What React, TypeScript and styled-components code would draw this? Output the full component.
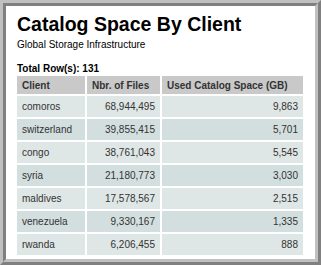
import styled, { createGlobalStyle } from 'styled-components';

const GlobalStyle = createGlobalStyle`
  html, body {
    margin: 0;
    padding: 0;
    background: #ffffff;
  }
`;

// two nested bevels make the ridge: light/dark outside, dark/light inside
const Frame = styled.div`
  width: 321px;
  height: 265px;
  box-sizing: border-box;
  border-style: solid;
  border-width: 3px;
  border-color: #c0c0c0 #808080 #808080 #c0c0c0;
`;

const Panel = styled.div`
  height: 100%;
  box-sizing: border-box;
  border-style: solid;
  border-width: 3px;
  border-color: #808080 #c0c0c0 #c0c0c0 #808080;
  background: #ffffff;
  padding: 7px 12px 0 11px;
  font-family: 'Liberation Sans', Arial, sans-serif;
  color: #000;
  overflow: hidden;
`;

const Title = styled.h1`
  margin: 0;
  font-size: 19.5px;
  font-weight: bold;
  line-height: 22px;
`;

const Subtitle = styled.div`
  font-size: 10px;
  margin-top: 3px;
  line-height: 14px;
`;

const Total = styled.div`
  font-size: 10px;
  font-weight: bold;
  margin-top: 11px;
  line-height: 12px;
`;

const Table = styled.table`
  width: 286px;
  border-collapse: separate;
  border-spacing: 0;
  font-size: 10px;
  margin-top: 1px;
`;

const Th = styled.th<{ $last?: boolean }>`
  background: #c9c9c9;
  color: #333333;
  text-align: left;
  font-weight: bold;
  height: 18px;
  padding: 0 5px;
  border-bottom: 2px solid #fff;
  border-right: ${p => (p.$last ? '0' : '2px solid #fff')};
  white-space: nowrap;
`;

const Td = styled.td<{ $alt?: boolean; $num?: boolean; $last?: boolean }>`
  background: ${p => (p.$alt ? '#d3dfdf' : '#dfe6e6')};
  color: #333333;
  text-align: ${p => (p.$num ? 'right' : 'left')};
  height: 21px;
  padding: 0 5px;
  border-bottom: 2px solid #fff;
  border-right: ${p => (p.$last ? '0' : '2px solid #fff')};
  white-space: nowrap;
`;

const rows = [
  ['comoros', '68,944,495', '9,863'],
  ['switzerland', '39,855,415', '5,701'],
  ['congo', '38,761,043', '5,545'],
  ['syria', '21,180,773', '3,030'],
  ['maldives', '17,578,567', '2,515'],
  ['venezuela', '9,330,167', '1,335'],
  ['rwanda', '6,206,455', '888'],
];

export default function App() {
  return (
    <>
      <GlobalStyle />
      <Frame>
        <Panel>
          <Title>Catalog Space By Client</Title>
          <Subtitle>Global Storage Infrastructure</Subtitle>
          <Total>Total Row(s): 131</Total>
          <Table>
            <thead>
              <tr>
                <Th style={{ width: 58 }}>Client</Th>
                <Th style={{ width: 63 }}>Nbr. of Files</Th>
                <Th $last>Used Catalog Space (GB)</Th>
              </tr>
            </thead>
            <tbody>
              {rows.map((r, i) => (
                <tr key={r[0]}>
                  <Td $alt={i % 2 === 1}>{r[0]}</Td>
                  <Td $alt={i % 2 === 1} $num>{r[1]}</Td>
                  <Td $alt={i % 2 === 1} $num $last>{r[2]}</Td>
                </tr>
              ))}
            </tbody>
          </Table>
        </Panel>
      </Frame>
    </>
  );
}
